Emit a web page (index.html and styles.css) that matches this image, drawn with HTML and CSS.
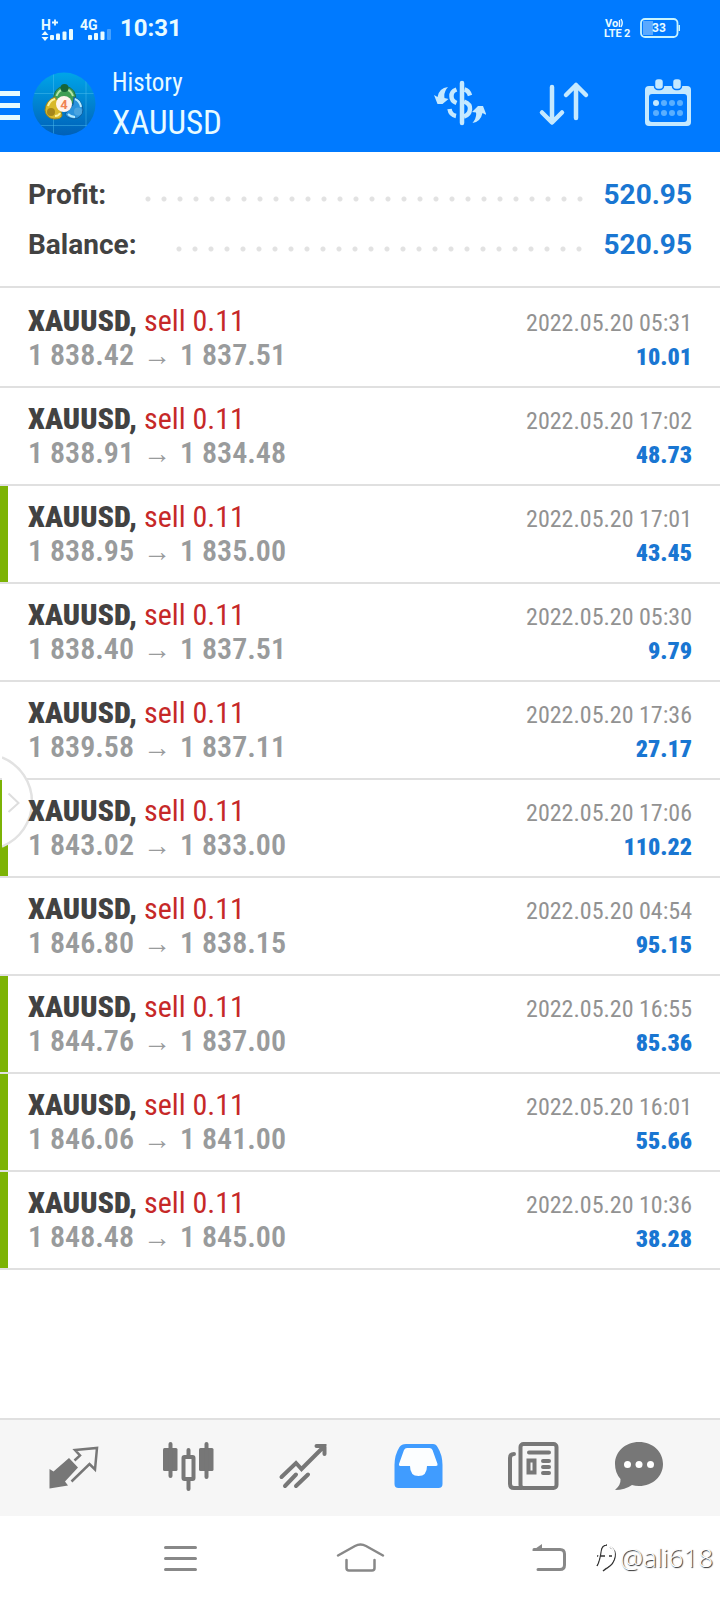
FILE: index.html
```html
<!DOCTYPE html>
<html lang="en">
<head>
<meta charset="utf-8">
<meta name="viewport" content="width=device-width, initial-scale=1">
<title>History XAUUSD</title>
<link rel="stylesheet" href="styles.css">
</head>
<body>
<header class="top">
  <div class="status">
    <svg class="signal" width="72" height="28" viewBox="40 12 72 28" aria-label="Signal">
      <g fill="#e8fbff">
        <text x="41" y="28" class="net">H</text>
        <path d="M52 20.500h6M55 17.500v6" stroke="#e8fbff" stroke-width="1.800"/>
        <text x="80" y="28" class="net">4G</text>
        <path d="M41.500 33l3.500-4 3.500 4zM41.500 35l3.500 4 3.500-4z"/>
        <rect x="50" y="33" width="4" height="5" rx="1"/><rect x="56" y="31.500" width="4" height="6.500" rx="1"/><rect x="62.500" y="29.500" width="4" height="8.500" rx="1"/><rect x="69" y="27" width="4" height="11" rx="1"/>
        <rect x="88" y="33" width="4" height="5" rx="1"/><rect x="94" y="31" width="4" height="7" rx="1"/><rect x="100.500" y="29.500" width="4" height="8.500" rx="1"/><rect x="107" y="27" width="4" height="11" rx="1" opacity=".3"/>
      </g>
    </svg>
    <span class="time">10:31</span>
    <svg class="lte" width="32" height="30" viewBox="602 13 32 30" aria-label="VoLTE 2">
      <g fill="#e8fbff"><text x="605" y="27" class="tiny">Vo</text><text x="604" y="37" class="tiny">LTE</text><text x="624" y="37" class="two">2</text></g>
      <path d="M619.500 20v7M621 19q2.500 4 0 8" fill="none" stroke="#e8fbff" stroke-width="1.400"/>
    </svg>
    <svg class="battery" width="42" height="22" viewBox="639 17 42 22" aria-label="Battery 33">
      <rect x="643" y="21" width="10" height="14" fill="#5aa9ff"/>
      <rect x="641" y="19" width="36.500" height="18" rx="4" fill="none" stroke="#c8f4ff" stroke-width="1.800"/>
      <rect x="678.500" y="25" width="1.500" height="6" fill="#c8f4ff"/>
      <text x="659" y="32" text-anchor="middle" class="charge">33</text>
    </svg>
  </div>
  <div class="bar">
    <button class="burger" aria-label="Menu"><svg width="20" height="30" viewBox="0 0 20 30"><path d="M0 2.500h20M0 14.500h20M0 26.500h20" stroke="#e6fbff" stroke-width="5"/></svg></button>
    <svg class="logo" width="64" height="64" viewBox="32 72 64 64" aria-hidden="true">
      <defs>
        <linearGradient id="sky" x1="0" y1="0" x2="0" y2="1"><stop offset="0" stop-color="#00a5e8"/><stop offset="1" stop-color="#0060b8"/></linearGradient>
        <clipPath id="disc"><circle cx="64" cy="104" r="31.500"/></clipPath>
      </defs>
      <circle cx="64" cy="104" r="31.500" fill="url(#sky)"/>
      <path clip-path="url(#disc)" d="M53.500 70v66M86 70v66M32 93.500h64M32 125.500h64" stroke="#4fc0f0" stroke-opacity=".45"/>
      <path d="M54 102q-2-14 10.500-16 13 2 11 16l-5 2-13-1z" fill="#3f9e55" stroke="#1f6f49"/>
      <path d="M56.500 96q2-5 5-6M73 96q-2-5-5-6" fill="none" stroke="#b4e6a8" stroke-width="2"/>
      <path d="M55 97q-9 3-10 13 1 8 9 9 8 0 8-4l-3-12z" fill="#d8b92c" stroke="#9c8620"/>
      <path d="M48 106q2-6 7-7M55 116q4 0 5-3" fill="none" stroke="#fbf2a0" stroke-width="2"/>
      <path d="M74 97q8 3 9 13-1 8-9 9-8-1-9-5l8-9z" fill="#2a92dc" stroke="#11609f"/>
      <path d="M81 107q-1-6-6-8M68 114q3 3 7 3" fill="none" stroke="#b6ebff" stroke-width="2"/>
      <circle cx="64.500" cy="88" r="4" fill="#17653a"/><circle cx="51" cy="112" r="4" fill="#a5861a"/><circle cx="78" cy="111.500" r="4" fill="#4aa4e0"/>
      <circle cx="64" cy="104" r="8" fill="#fff4ee"/>
      <text x="64" y="109" text-anchor="middle" class="four">4</text>
    </svg>
    <div class="heading"><div class="screen">History</div><h1>XAUUSD</h1></div>
    <div class="actions">
      <button aria-label="Symbol"><svg width="52" height="52" viewBox="434 78 52 52"><g fill="none" stroke="#c5e9ff" stroke-width="4.500"><path d="M462 83v40" stroke-linecap="round"/><path d="M456.500 89.500q-5.500 2-5 7 0 4.500 5 6.500M464.500 89.500q4 1 5.500 6M449.500 109q1 6 6.500 7M464 101.500q6.500 2.500 6 7.500-.500 6-6 7.500"/></g><path fill="#c5e9ff" d="M448 87q-9 1-10.500 10l-3.500-2 3.500 9h5l6-5-4-1q-1-6 3.500-11zM472.500 123q8-1 10-10l4 2-3.500-9h-5l-6 6 4 .500q1 5-3.500 10.500z"/></svg></button>
      <button aria-label="Sort"><svg width="52" height="52" viewBox="538 78 52 52"><path d="M552 87v34M542 112.500l10 10 10-10M576 118V85M566 95l10-10 10 10" fill="none" stroke="#c5e9ff" stroke-width="4.500" stroke-linecap="round" stroke-linejoin="round"/></svg></button>
      <button aria-label="Period"><svg width="52" height="52" viewBox="642 78 52 52"><rect x="645" y="86" width="46" height="40" rx="4" fill="#c5e9ff"/><rect x="649" y="94" width="38" height="28" rx="3" fill="#007aff"/><g fill="#c5e9ff" stroke="#007aff" stroke-width="1.500"><rect x="654.500" y="78.500" width="9" height="11" rx="3.500"/><rect x="672.500" y="78.500" width="9" height="11" rx="3.500"/></g><circle cx="656" cy="103" r="3" fill="#c5e9ff"/><g fill="#5aafff"><circle cx="664" cy="103" r="3"/><circle cx="672" cy="103" r="3"/><circle cx="680" cy="103" r="3"/><circle cx="656" cy="113" r="3"/><circle cx="664" cy="113" r="3"/><circle cx="672" cy="113" r="3"/><circle cx="680" cy="113" r="3"/></g></svg></button>
    </div>
  </div>
</header>
<main>
  <dl class="summary">
    <div class="total"><dt>Profit:</dt><dd>520.95</dd></div>
    <div class="total"><dt>Balance:</dt><dd>520.95</dd></div>
  </dl>
  <ul class="deals">
    <li class="deal"><div class="line"><b>XAUUSD, <span class="sell">sell 0.11</span></b><time>2022.05.20 05:31</time></div><div class="line"><span class="prices">1 838.42<i>→</i>1 837.51</span><strong>10.01</strong></div></li>
    <li class="deal"><div class="line"><b>XAUUSD, <span class="sell">sell 0.11</span></b><time>2022.05.20 17:02</time></div><div class="line"><span class="prices">1 838.91<i>→</i>1 834.48</span><strong>48.73</strong></div></li>
    <li class="deal target"><div class="line"><b>XAUUSD, <span class="sell">sell 0.11</span></b><time>2022.05.20 17:01</time></div><div class="line"><span class="prices">1 838.95<i>→</i>1 835.00</span><strong>43.45</strong></div></li>
    <li class="deal"><div class="line"><b>XAUUSD, <span class="sell">sell 0.11</span></b><time>2022.05.20 05:30</time></div><div class="line"><span class="prices">1 838.40<i>→</i>1 837.51</span><strong>9.79</strong></div></li>
    <li class="deal"><div class="line"><b>XAUUSD, <span class="sell">sell 0.11</span></b><time>2022.05.20 17:36</time></div><div class="line"><span class="prices">1 839.58<i>→</i>1 837.11</span><strong>27.17</strong></div></li>
    <li class="deal target"><svg class="handle" width="34" height="100" viewBox="2 752 34 100" aria-hidden="true"><path d="M2 757.500A48 48 0 0 1 2 846.500z" fill="#fff"/><path d="M2 757.500A48 48 0 0 1 2 846.500" fill="none" stroke="#e2e2e2" stroke-width="2.500"/><path d="M8.500 793.500l10 9.500-10 9" fill="none" stroke="#dedede" stroke-width="2"/></svg><div class="line"><b>XAUUSD, <span class="sell">sell 0.11</span></b><time>2022.05.20 17:06</time></div><div class="line"><span class="prices">1 843.02<i>→</i>1 833.00</span><strong>110.22</strong></div></li>
    <li class="deal"><div class="line"><b>XAUUSD, <span class="sell">sell 0.11</span></b><time>2022.05.20 04:54</time></div><div class="line"><span class="prices">1 846.80<i>→</i>1 838.15</span><strong>95.15</strong></div></li>
    <li class="deal target"><div class="line"><b>XAUUSD, <span class="sell">sell 0.11</span></b><time>2022.05.20 16:55</time></div><div class="line"><span class="prices">1 844.76<i>→</i>1 837.00</span><strong>85.36</strong></div></li>
    <li class="deal target"><div class="line"><b>XAUUSD, <span class="sell">sell 0.11</span></b><time>2022.05.20 16:01</time></div><div class="line"><span class="prices">1 846.06<i>→</i>1 841.00</span><strong>55.66</strong></div></li>
    <li class="deal target"><div class="line"><b>XAUUSD, <span class="sell">sell 0.11</span></b><time>2022.05.20 10:36</time></div><div class="line"><span class="prices">1 848.48<i>→</i>1 845.00</span><strong>38.28</strong></div></li>
  </ul>
</main>
<nav class="tabs">
  <button aria-label="Quotes"><svg width="56" height="56" viewBox="46 1440 56 56"><path fill="#777" d="M69 1458l9 9.500-13 14 3 4-18.500 3V1469l4 2.500z"/><path d="M74.500 1460.500l5.500-5-5-5.500 22-2-2 21.500-5.500-5.500-18 17.500" fill="none" stroke="#777" stroke-width="2.500"/></svg></button>
  <button aria-label="Charts"><svg width="56" height="56" viewBox="161 1440 56 56"><g fill="#777"><rect x="163" y="1448" width="14.500" height="23" rx="1.500"/><rect x="199" y="1448" width="14.500" height="23" rx="1.500"/></g><path d="M170.500 1444v32M206.500 1444v33M188.500 1450v6M188.500 1481v8" stroke="#777" stroke-width="4" stroke-linecap="round"/><rect x="183.500" y="1457" width="10" height="22" rx="1" fill="none" stroke="#777" stroke-width="4"/></svg></button>
  <button aria-label="Trade"><svg width="56" height="56" viewBox="276 1440 56 56"><path d="M281.500 1477l14.500-14 5.500 6 23-23M316.500 1446h8v8M285 1486l11-11.500M296 1486l12-11.500" fill="none" stroke="#777" stroke-width="4" stroke-linecap="round"/></svg></button>
  <button aria-label="History" aria-current="page"><svg width="56" height="56" viewBox="391 1440 56 56"><path fill="#409cff" d="M406 1444h27q3 0 4.500 3 5 8 5 18v19q0 4-4 4h-40q-4 0-4-4v-19q0-10 5-18 2-3 6.500-3z"/><path fill="#fcfeff" d="M407 1448q-2 0-3 2l-5 14q-.500 2 2 2h9q0 10 8.500 10t8.500-10h9q2 0 1.500-2l-5-14q-1-2-3-2z"/></svg></button>
  <button aria-label="News"><svg width="56" height="56" viewBox="506 1440 56 56"><g fill="none" stroke="#777" stroke-width="4" stroke-linecap="round"><rect x="520.500" y="1444" width="36" height="44" rx="3"/><path d="M514 1454q-4 0-4 4v26q0 4 4 4h8M529 1452.500h20M543 1461h6M543 1467h6M543 1473h6"/><rect x="528.500" y="1460.500" width="6" height="12"/></g></svg></button>
  <button aria-label="Messages"><svg width="56" height="56" viewBox="613 1440 56 56"><path fill="#777" d="M639 1442c14 0 24 10 24 22s-10 22-24 22q-4 0-7-1-7 5-17 5 6-5 5.500-11-5.500-6-5.500-15c0-12 10-22 24-22z"/><g fill="#fff"><circle cx="627.500" cy="1464.500" r="3.500"/><circle cx="639" cy="1464.500" r="3.500"/><circle cx="650.500" cy="1464.500" r="3.500"/></g></svg></button>
</nav>
<footer class="system">
  <button aria-label="Recent apps"><svg width="56" height="44" viewBox="152 1536 56 44"><path d="M165.500 1547.500h30M165.500 1558.500h30M165.500 1569.500h30" stroke="#888" stroke-width="3" stroke-linecap="round"/></svg></button>
  <button aria-label="Home"><svg width="56" height="44" viewBox="336 1536 56 44"><path d="M338 1555.500l17-9.500q5.500-3 11 0l17 9.500M346.500 1560v8q0 2.500 2.500 2.500h23q2.500 0 2.500-2.500v-8" fill="none" stroke="#888" stroke-width="2.500" stroke-linecap="round"/></svg></button>
  <button aria-label="Back"><svg width="56" height="44" viewBox="520 1536 56 44"><path fill="#888" d="M532 1551l10-7v7z"/><path d="M534 1549.500h26q4.500 0 4.500 4.500v11q0 4.500-4.500 4.500h-22" fill="none" stroke="#888" stroke-width="3" stroke-linecap="round"/></svg></button>
  <div class="mark"><svg width="26" height="32" viewBox="592 1542 26 32" aria-hidden="true"><path d="M597 1567q3-6 4-15 1-6 6-6M597 1557h8M610 1548q6 3 5 10-1 7-8 11l-4 3M609 1557h3" fill="none" stroke="#333" stroke-width="1.500"/><path d="M596 1566q3-6 4-15 1-6 6-6M609 1547q6 3 5 10-1 7-8 11" fill="none" stroke="#fff" stroke-width="1.500"/></svg><span>@ali618</span></div>
</footer>
</body>
</html>
```
FILE: styles.css
```css
* { box-sizing: border-box; }
body {
  margin: 0;
  min-height: 100vh;
  display: flex;
  flex-direction: column;
  background: #fff;
  color: #424242;
  font-family: Roboto, "Liberation Sans", sans-serif;
}
button { border: 0; padding: 0; background: none; display: flex; align-items: center; justify-content: center; cursor: pointer; }
svg { display: block; flex: none; }
h1, dl, dd, ul { margin: 0; padding: 0; }

.top { background: #007aff; color: #e8fbff; }
.status { height: 56px; padding: 0 39px 0 40px; display: flex; align-items: center; }
.time { font-size: 24px; font-weight: 700; margin-left: 8px; margin-right: auto; }
.lte { margin-right: 5px; }
.net { font-size: 14px; font-weight: 700; }
.tiny { font-size: 11px; font-weight: 700; }
.two { font-size: 11px; font-weight: 700; }
.charge { font-size: 12px; font-weight: 700; fill: #e8fbff; }
.four { font-size: 13px; font-weight: 700; fill: #ef8354; }

.bar { height: 96px; display: flex; align-items: center; padding-right: 26px; }
.burger { padding-top: 4px; }
.logo { margin-left: 12px; }
.heading, .deal { font-family: "Roboto Condensed", Roboto, sans-serif; }
.heading { margin-left: 16px; margin-right: auto; padding-bottom: 2px; }
.screen { font-size: 25px; line-height: 40px; }
h1 { font-size: 33px; line-height: 40px; font-weight: 400; }
.actions { display: flex; gap: 52px; }

.summary { padding: 18px 28px 16px; border-bottom: 2px solid #e0e0e0; font-size: 28px; font-weight: 700; line-height: 50px; }
.total { display: flex; align-items: center; }
.total::after {
  content: "";
  order: 1;
  flex: 1;
  height: 6px;
  margin: 8px 20px 0 39px;
  background: radial-gradient(circle at 3px 3px, #e2e2e2 2px, transparent 3px) 0 0 / 16px 6px repeat-x;
}
dd { order: 2; color: #1976d2; }

.deals { list-style: none; padding-top: 2px; }
.deal { position: relative; padding: 14px 28px; border-bottom: 2px solid #e0e0e0; }
.target { box-shadow: inset 8px 0 0 #7cb305; }
.line { display: flex; justify-content: space-between; align-items: baseline; height: 34px; line-height: 34px; font-size: 30px; font-weight: 700; white-space: nowrap; }
.target .line { position: relative; z-index: 2; }
.sell { color: #c62828; font-weight: 400; }
time { font-size: 24px; font-weight: 400; color: #929292; }
.prices { color: #999b9c; font-weight: 600; }
.prices i { font: 400 28px/30px "Liberation Sans", sans-serif; margin: 0 9px; }
.line strong { font-size: 24px; color: #1976d2; }
.handle { position: absolute; left: 2px; top: -28px; z-index: 1; }

.tabs { margin-top: auto; height: 98px; padding: 0 30px 0 16px; border-top: 2px solid #e0e0e0; background: #f6f6f6; display: grid; grid-template-columns: repeat(5, 7fr) 6fr; }
.system { position: relative; height: 84px; padding: 0 80px 0 88px; display: grid; grid-template-columns: repeat(3, 1fr); }
.mark { position: absolute; right: 7px; bottom: 27px; display: flex; align-items: center; gap: 2px; font: 300 26px/32px "Open Sans", sans-serif; color: #fff; text-shadow: 1px 1px 1px #222; }
```
